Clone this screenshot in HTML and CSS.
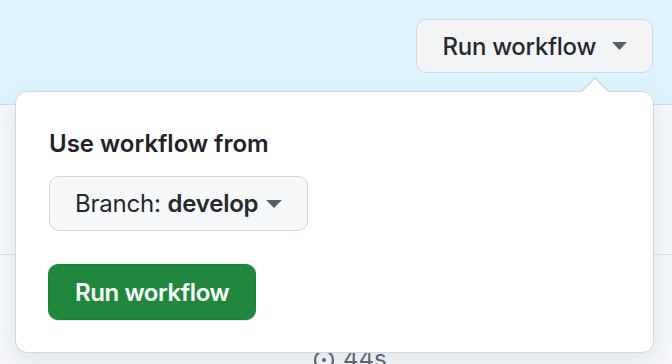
FILE: index.html
```html
<!DOCTYPE html>
<html>
  <head>
    <meta charset="utf-8">
    <title>Run workflow</title>
    <meta name="viewport" content="width=device-width, initial-scale=1">
    <link rel="stylesheet" href="styles.css">
  </head>
  <body>
    <div class="banner">
      <button class="btn btn-header" type="button">
        Run workflow
        <svg class="caret" width="15" height="8" viewBox="0 0 15 8"><path d="M0 0h15L7.5 8z"/></svg>
      </button>
    </div>

    <div class="runs">
      <div class="run-row"></div>
      <div class="run-row run-row-time">
        <svg class="stopwatch" width="22" height="22" viewBox="0 0 22 22">
          <circle cx="11" cy="12" r="9" fill="none" stroke="#57606a" stroke-width="2.2"/>
          <circle cx="11" cy="12" r="2" fill="#57606a"/>
        </svg>
        <span>44s</span>
      </div>
    </div>

    <!-- Popover opened from the Run workflow button -->
    <div class="popover">
      <h3>Use workflow from</h3>
      <button class="btn btn-branch" type="button">
        <span>Branch: <strong>develop</strong></span>
        <svg class="caret" width="16" height="8" viewBox="0 0 16 8"><path d="M0 0h16L8 8z"/></svg>
      </button>
      <button class="btn btn-primary" type="button">Run workflow</button>
    </div>
  </body>
</html>
```

FILE: styles.css
```css
body {
  margin: 0;
  font-family: Inter, "Noto Sans", Arial, sans-serif;
  color: #1f2328;
  background: #f6f8fa;
  position: relative;
  height: 364px;
  overflow: hidden;
}

.banner {
  height: 105px;
  box-sizing: border-box;
  background: #ddf4ff;
  border-bottom: 1px solid #b6e3ff;
  display: flex;
  justify-content: flex-end;
  align-items: flex-start;
  padding: 19px 19px 0 0;
}

.btn {
  display: flex;
  align-items: center;
  box-sizing: border-box;
  font-family: inherit;
  font-size: 24px;
  border-radius: 10px;
  cursor: pointer;
}

.btn-header {
  height: 54px;
  padding: 0 25px 0 26px;
  gap: 16px;
  font-weight: 500;
  letter-spacing: -0.3px;
  color: #24292f;
  background: #f3f4f6;
  border: 1.5px solid #d0d7de;
}

.caret path {
  fill: #57606a;
}

.runs {
  background: #f6f8fa;
}

.run-row {
  height: 149px;
  border-bottom: 1.5px solid #d8dee4;
}

.run-row-time {
  height: auto;
  border-bottom: 0;
  padding: 89px 0 0 313px;
  display: flex;
  align-items: center;
  gap: 8px;
  font-size: 24px;
  color: #57606a;
}

.popover {
  position: absolute;
  left: 15px;
  top: 91px;
  width: 639px;
  height: 262px;
  box-sizing: border-box;
  padding: 37px 33px;
  background: #fff;
  border: 1.5px solid #d0d7de;
  border-radius: 12px;
  box-shadow: 0 8px 24px rgba(140, 149, 159, 0.2);
}

.popover::before,
.popover::after {
  content: "";
  position: absolute;
  left: 565px;
  border: 14px solid transparent;
  border-top: 0;
}

.popover::before {
  top: -15px;
  border-bottom: 14px solid #d0d7de;
}

.popover::after {
  top: -13px;
  border-bottom: 14px solid #fff;
}

.popover h3 {
  margin: 0 0 17px;
  font-size: 24px;
  font-weight: 600;
  line-height: 30px;
}

.btn-branch {
  height: 55px;
  padding: 0 25px;
  gap: 8px;
  font-weight: 400;
  letter-spacing: -0.2px;
  color: #24292f;
  background: #f6f8fa;
  border: 1.5px solid #d0d7de;
}

.btn-branch strong {
  font-weight: 600;
}

.btn-primary {
  margin-top: 33px;
  margin-left: -1px;
  height: 56px;
  padding: 0 26px;
  font-weight: 600;
  letter-spacing: -0.4px;
  color: #fff;
  background: #1f883d;
  border: 1.5px solid #1a7f37;
  box-shadow: 0 1px 0 rgba(31, 35, 40, 0.1);
}
```
